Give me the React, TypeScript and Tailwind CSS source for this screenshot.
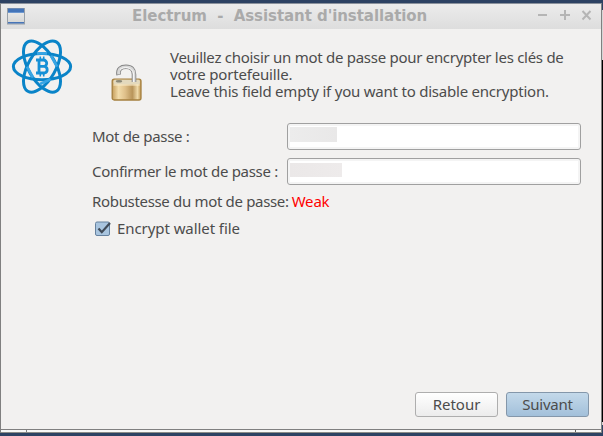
import type { ReactNode } from "react";

const ElectrumLogo = () => {
    return (
        <svg className="block" width="62" height="56" viewBox="-31 -27.6 62 56" fill="none">
            <g stroke="#0a84c8" strokeWidth="3">
                <ellipse rx="28.6" ry="13.2" />
                <ellipse rx="28.5" ry="13.6" transform="rotate(60)" />
                <ellipse rx="28.5" ry="13.6" transform="rotate(-60)" />
            </g>
            <g stroke="#38a5e4" strokeWidth="2.8">
                <path d="M-5 -13.2 H5" />
                <path d="M8.5 12.6 L-2 17.5" />
                <path d="M9 -11 L15 0" />
                <path d="M-15 0 L-9 11" />
            </g>
            <g stroke="#1590d6" strokeWidth="2.8">
                <path d="M-6 -6.6 H1.5 A3.2 3.2 0 0 1 1.5 -0.2 H-3 M1.5 -0.2 H2.6 A3.4 3.4 0 0 1 2.6 6.4 H-6 M-3 -6.6 V6.4" />
                <path strokeWidth="1.6" d="M-1.7 -10 V-7 M1.7 -10 V-7 M-1.7 7 V10 M1.7 7 V10" />
            </g>
        </svg>
    );
};

const Padlock = () => {
    return (
        <svg className="block" width="32" height="38" viewBox="0 0 32 38" fill="none">
            <defs>
                <linearGradient id="brass" x1="0" x2="1">
                    <stop offset="0" stopColor="#c69e5c" />
                    <stop offset="0.22" stopColor="#f2dcaa" />
                    <stop offset="0.45" stopColor="#dfc08a" />
                    <stop offset="0.7" stopColor="#b8945a" />
                    <stop offset="0.88" stopColor="#efd9a8" />
                    <stop offset="1" stopColor="#bd9551" />
                </linearGradient>
            </defs>
            <rect x="1.2" y="15.2" width="28.8" height="20.8" rx="2" fill="url(#brass)" stroke="#a5803f" strokeWidth="1.3" />
            <rect x="2.5" y="15.8" width="26.4" height="4.6" rx="1.5" fill="#e3d9bd" />
            <ellipse cx="8" cy="17.3" rx="3.2" ry="1.2" fill="#8c8977" />
            <path d="M2.5 21 H28.7" stroke="#fbedcb" />
            <path d="M7.6 11 C6.6 5 10 2.8 15 2.8 C20.5 2.8 23 6 23 10.5 V18" stroke="#858585" strokeWidth="4.6" />
            <path d="M7.6 10.4 C7 5 10 2.9 15 2.9 C20.5 2.9 23 6 23 10.5 V18" stroke="#d8d8d8" strokeWidth="2.8" />
            <path d="M9 5.5 C13 2.2 21.5 2.8 22.6 10 V18" stroke="#f8f8f8" />
        </svg>
    );
};

const WindowIcon = () => {
    return (
        <svg className="block" width="18" height="17" viewBox="0 0 18 17">
            <defs>
                <linearGradient id="pane" x1="0" y1="0" x2="0" y2="1">
                    <stop offset="0" stopColor="#f0f0f0" />
                    <stop offset="1" stopColor="#d3d4d3" />
                </linearGradient>
            </defs>
            <rect x="0.5" y="0.5" width="17" height="15.5" fill="url(#pane)" stroke="#98a0a8" />
            <rect x="1" y="0.5" width="16" height="4.5" fill="#4475b9" />
            <rect x="1" y="4" width="16" height="1" fill="#6d98d0" />
            <rect x="1" y="14" width="16" height="1.5" fill="#4775b8" />
        </svg>
    );
};

const TitleBar = () => {
    return (
        <div className="flex h-[25px] items-start bg-linear-to-b from-[#ececec] to-[#dddddd] pl-[6px]">
            <div className="pt-[4px]">
                <WindowIcon />
            </div>
            <p className="ml-[107px] w-[300px] whitespace-pre pt-px font-['DejaVu_Sans',sans-serif] text-[15px] leading-[23px] font-bold tracking-[-0.06px] text-[#aaaaaa]">
                {"Electrum  -  Assistant d'installation"}
            </p>
            <svg className="mt-[5px] ml-[105px] block" width="58" height="14" viewBox="0 0 58 14" stroke="#b5b5b5" strokeWidth="2" fill="none">
                <path d="M1 6 H10" />
                <path d="M23 6 H33 M28 1 V11" />
                <path d="M45.5 2 L53.5 10.5 M53.5 2 L45.5 10.5" />
            </svg>
        </div>
    );
};

type RowProps = {
    label: string;
    labelClass: string;
    children: ReactNode;
};

const PasswordRow = ({ label, labelClass, children }: RowProps) => {
    return (
        <div className="flex h-[27px] items-center">
            <label className={`w-[195px] whitespace-nowrap ${labelClass}`}>{label}</label>
            <div className="h-[27px] w-[294px] rounded-[3px] border border-[#a0a0a0] bg-white pt-[3px] pl-[2px] shadow-[inset_0_0_0_2px_#f4f4f4]">
                {children}
            </div>
        </div>
    );
};

const App = () => {
    return (
        <div className="flex h-[436px] w-[603px] flex-col overflow-hidden bg-[#2d4263] font-['Noto_Sans',sans-serif] text-[15px] leading-[17px] text-[#4c4c4c]">
            <div className="h-[3px]"></div>
            <div className="flex h-[430px]">
                <div className="flex w-[602px] flex-col border-x border-t border-[#808080] border-t-[#8a919c] bg-[#f2f1f0]">
                    <TitleBar />

                    <div className="flex h-[94px]">
                        <div className="w-[99px] pt-[10px] pl-[10px]">
                            <ElectrumLogo />
                        </div>
                        <div className="w-[70px] pt-[35px] pl-[11px]">
                            <Padlock />
                        </div>
                        <div className="pt-[20px] whitespace-nowrap">
                            <p className="tracking-[-0.28px]">Veuillez choisir un mot de passe pour encrypter les clés de</p>
                            <p className="tracking-[-0.18px]">votre portefeuille.</p>
                            <p className="tracking-[-0.22px]">Leave this field empty if you want to disable encryption.</p>
                        </div>
                    </div>

                    <div className="flex flex-col gap-[8px] pl-[91px]">
                        <PasswordRow label="Mot de passe :" labelClass="tracking-[-0.32px]">
                            <div className="h-[15px] w-[47px] bg-linear-to-r from-[#ececec] to-[#e9e8e8]"></div>
                        </PasswordRow>
                        <PasswordRow label="Confirmer le mot de passe :" labelClass="tracking-[-0.31px]">
                            <div className="mt-[1px] h-[14px] w-[52px] bg-linear-to-r from-[#ebe8e8] to-[#eeebeb]"></div>
                        </PasswordRow>
                    </div>

                    <p className="mt-[8px] pl-[91px] whitespace-nowrap">
                        <span className="tracking-[-0.33px]">Robustesse du mot de passe:</span>
                        <span className="ml-[3px] tracking-[-0.2px] text-[#ff0000]">Weak</span>
                    </p>

                    <div className="mt-[10px] flex items-center pl-[94px]">
                        <svg className="block" width="17" height="16" viewBox="0 0 17 16" fill="none">
                            <rect x="0.5" y="1" width="14" height="13.5" rx="1.5" fill="#a9c5df" stroke="#66829f" />
                            <path d="M3.5 7.5 L6.8 11.2 L15 2" stroke="#404b58" strokeWidth="2.2" />
                        </svg>
                        <span className="ml-[5px] tracking-[-0.07px]">Encrypt wallet file</span>
                    </div>

                    <div className="mt-auto mb-[12px] flex justify-end gap-[8px] pr-[12px]">
                        <button className="h-[25px] w-[83px] rounded-[3px] border border-[#aeaeae] bg-linear-to-b from-white to-[#ececec]">Retour</button>
                        <button className="h-[25px] w-[83px] rounded-[3px] border border-[#8497aa] bg-linear-to-b from-[#c4d9ea] to-[#a2c0da] tracking-[-0.2px]">Suivant</button>
                    </div>
                    <div className="flex h-[4px] border-y border-t-[#808080] border-b-[#8c8c88] bg-[#f8f8f7]">
                        <div className="w-[26px] border-r border-[#808080]"></div>
                        <div className="w-[549px] border-r border-[#606060]"></div>
                    </div>
                </div>
                <div className="flex w-px flex-col">
                    <div className="h-[7px]"></div>
                    <div className="h-[50px] bg-[#d6d6d6]"></div>
                    <div className="h-[362px] bg-black"></div>
                    <div className="h-[3px] bg-[#d6d6d6]"></div>
                </div>
            </div>
        </div>
    );
};

export default App;
